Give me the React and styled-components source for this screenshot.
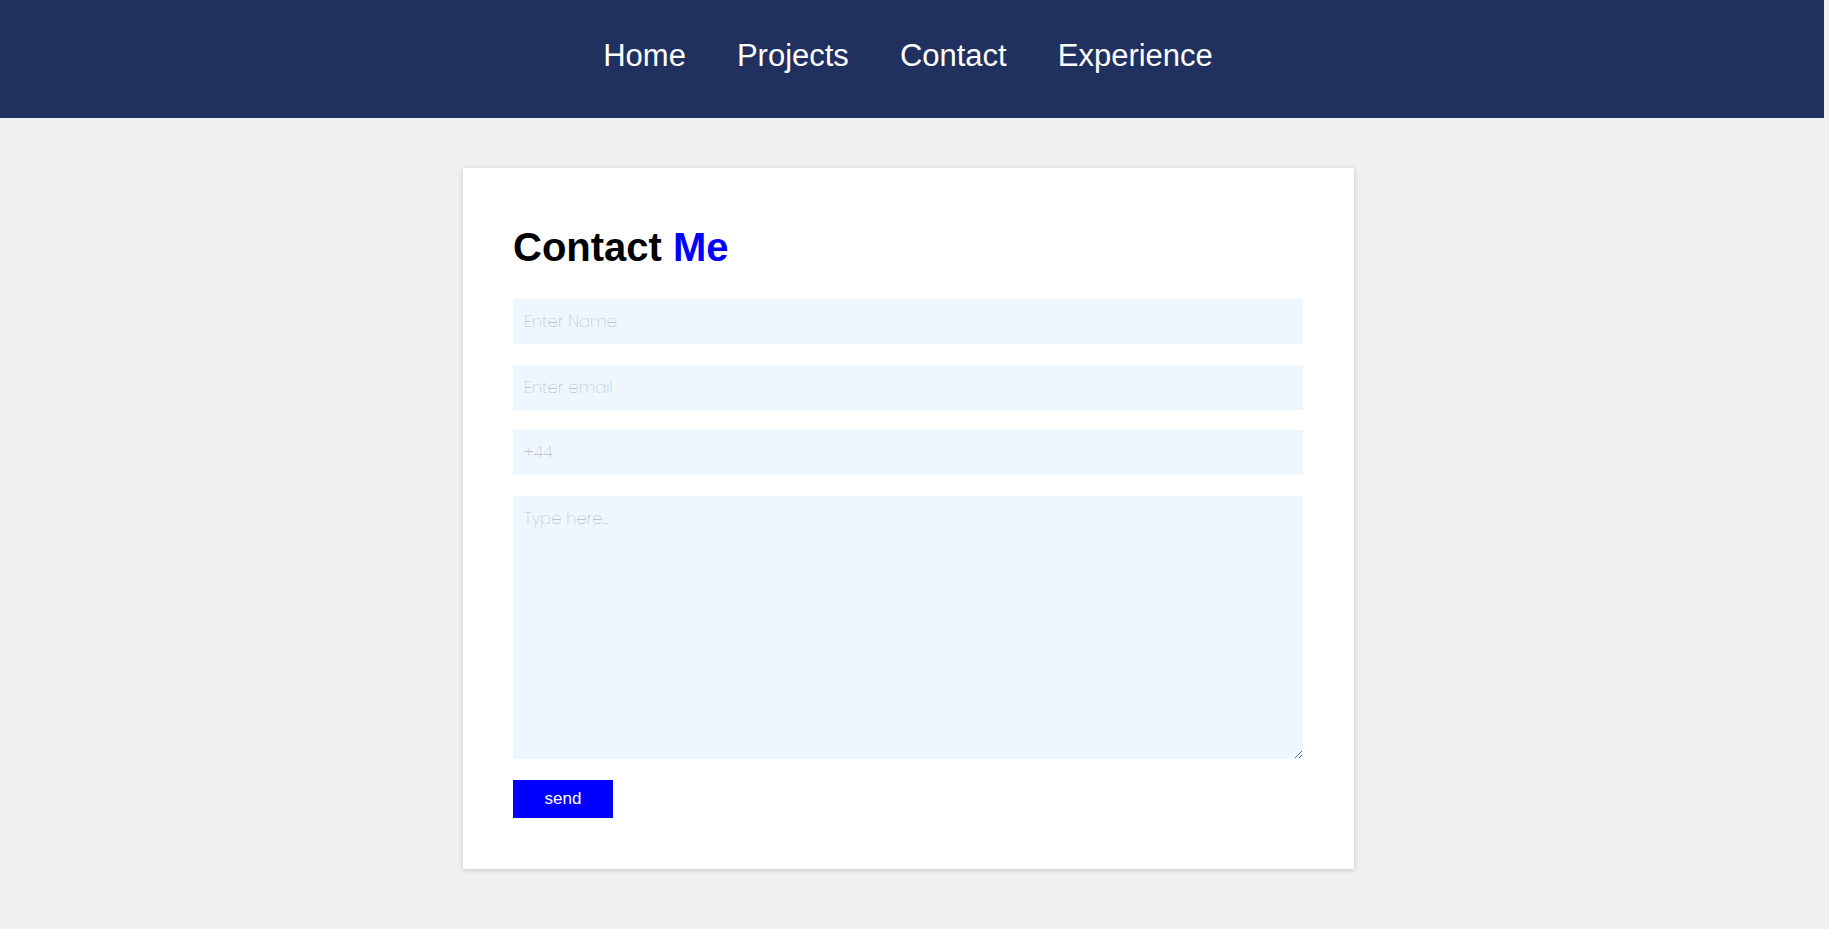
import React from "react";
import styled, { createGlobalStyle } from "styled-components";

const Global = createGlobalStyle`
  html, body { margin: 0; padding: 0; }
  body {
    background: #f0f0f0;
    font-family: "Liberation Sans", Arial, sans-serif;
  }
`;

const NavBar = styled.nav`
  height: 118px;
  margin-right: 5px;
  background: #21315f;
  display: flex;
  justify-content: center;
  align-items: flex-start;
  padding-right: 8px;
  box-sizing: border-box;
`;

const NavList = styled.ul`
  list-style: none;
  margin: 0;
  padding: 38px 0 0;
  display: flex;
  gap: 51px;
`;

const NavLink = styled.a`
  color: #ffffff;
  font-size: 31px;
  text-decoration: none;
  font-family: "Liberation Sans", Arial, sans-serif;
`;

const Main = styled.main`
  display: flex;
  justify-content: center;
  padding: 50px 12px 50px 0;
`;

const Card = styled.section`
  width: 891px;
  box-sizing: border-box;
  background: #ffffff;
  padding: 50px 51px 51px 50px;
  box-shadow: 0 1px 5px rgba(0, 0, 0, 0.18);
`;

const Title = styled.h2`
  margin: 6px 0 29px;
  font-size: 40px;
  font-weight: 700;
  color: #000;
  line-height: 46px;
`;

const Accent = styled.span`
  color: #0000ff;
`;

const Form = styled.form`
  display: flex;
  flex-direction: column;
  gap: 20.5px;
  align-items: flex-start;
`;

const fieldBase = `
  width: 100%;
  box-sizing: border-box;
  border: none;
  outline: none;
  background: #eef6ff;
  font-family: "Poppins", "Lato", "Inter", sans-serif;
  font-weight: 200;
  font-size: 16.5px;
  color: #333;
  padding: 0 10px 0 11px;
  &::placeholder { color: #a0a0a0; }
`;

const Field = styled.input`
  ${fieldBase}
  height: 45px;
`;

const Message = styled.textarea`
  ${fieldBase}
  height: 263.5px;
  padding: 10px 10px 10px 11px;
  display: block;
`;

const SendButton = styled.button`
  width: 100px;
  height: 38px;
  border: none;
  background: #0000ff;
  color: #fff;
  font-family: "Liberation Sans", Arial, sans-serif;
  font-size: 17px;
  cursor: pointer;
`;

export default function App() {
  const links = ["Home", "Projects", "Contact", "Experience"];
  return (
    <>
      <Global />
      <NavBar>
        <NavList>
          {links.map((l) => (
            <li key={l}>
              <NavLink href="#">{l}</NavLink>
            </li>
          ))}
        </NavList>
      </NavBar>
      <Main>
        <Card>
          <Title>
            Contact <Accent>Me</Accent>
          </Title>
          <Form onSubmit={(e) => e.preventDefault()}>
            <Field type="text" placeholder="Enter Name" />
            <Field type="email" placeholder="Enter email" />
            <Field type="tel" placeholder="+44" />
            <Message placeholder="Type here..." />
            <SendButton type="submit">send</SendButton>
          </Form>
        </Card>
      </Main>
    </>
  );
}
